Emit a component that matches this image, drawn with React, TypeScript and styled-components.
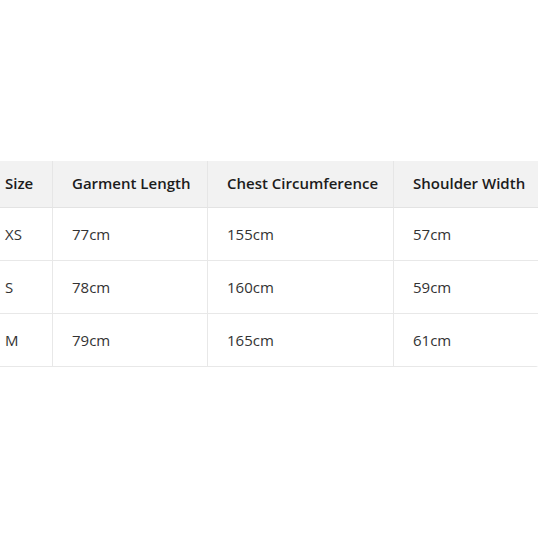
import React from "react";
import styled, { createGlobalStyle } from "styled-components";

const Global = createGlobalStyle`
  html, body { margin: 0; padding: 0; background: #fff; }
  body { font-family: "Open Sans", "Noto Sans", sans-serif; }
`;

const Page = styled.div`
  width: 538px;
  height: 538px;
  overflow: hidden;
  padding-top: 161px;
  box-sizing: border-box;
`;

const Table = styled.table`
  margin-left: -14px;
  width: 552px;
  table-layout: fixed;
  border-collapse: separate;
  border-spacing: 0;
  font-size: 15px;
  border-radius: 0 0 2px 0;
  overflow: hidden;
`;

const Th = styled.th`
  height: 43px;
  padding: 0 19px 3px 19px;
  background: #f2f2f2;
  color: #1c1c1c;
  font-weight: 600;
  text-align: left;
  white-space: nowrap;
  border-bottom: 1px solid #e3e3e3;
  border-left: 1px solid #e6e6e6;
  &:first-child { border-left: none; }
`;

const Td = styled.td`
  height: 52px;
  padding: 0 19px;
  color: #333;
  text-align: left;
  white-space: nowrap;
  border-bottom: 1px solid #e8e8e8;
  border-left: 1px solid #e8e8e8;
  &:first-child { border-left: none; }
`;

const cols = [66, 155, 186, 145];
const headers = ["Size", "Garment Length", "Chest Circumference", "Shoulder Width"];
const rows = [
  ["XS", "77cm", "155cm", "57cm"],
  ["S", "78cm", "160cm", "59cm"],
  ["M", "79cm", "165cm", "61cm"],
];

export default function App() {
  return (
    <Page>
      <Global />
      <Table>
        <colgroup>
          {cols.map((w, i) => (
            <col key={i} style={{ width: w }} />
          ))}
        </colgroup>
        <thead>
          <tr>
            {headers.map((h) => (
              <Th key={h}>{h}</Th>
            ))}
          </tr>
        </thead>
        <tbody>
          {rows.map((r) => (
            <tr key={r[0]}>
              {r.map((c, i) => (
                <Td key={i}>{c}</Td>
              ))}
            </tr>
          ))}
        </tbody>
      </Table>
    </Page>
  );
}
